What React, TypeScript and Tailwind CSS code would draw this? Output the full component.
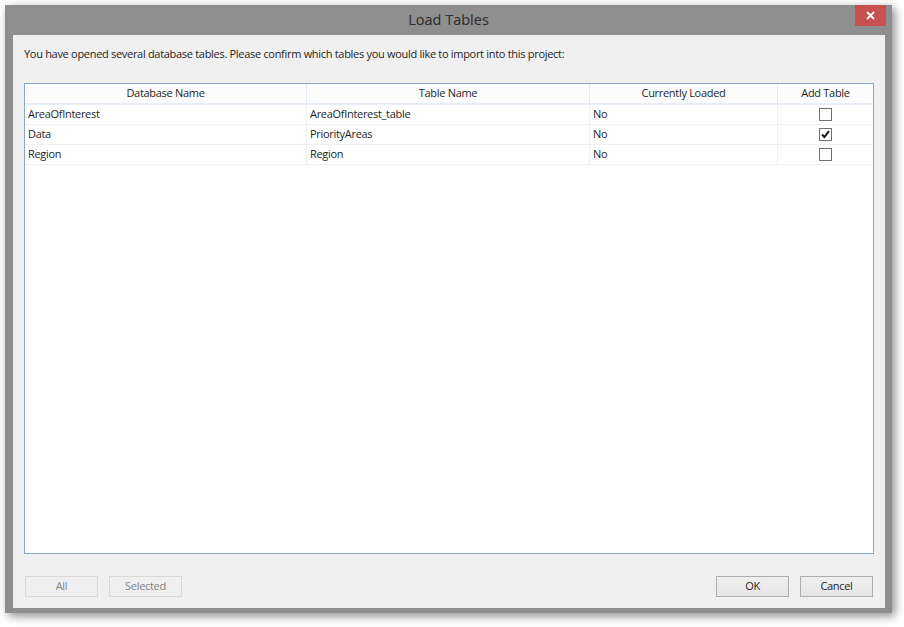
import React from 'react';

const rows = [
  { db: 'AreaOfInterest', table: 'AreaOfInterest_table', loaded: 'No', add: false },
  { db: 'Data', table: 'PriorityAreas', loaded: 'No', add: true },
  { db: 'Region', table: 'Region', loaded: 'No', add: false },
];

function CheckBox({ checked }: { checked: boolean }) {
  return (
    <div className="w-[13px] h-[13px] border border-[#707070] bg-white flex items-center justify-center">
      {checked && (
        <svg width="9" height="9" viewBox="0 0 9 9">
          <path d="M1 4.5 L3.4 7 L8 1.2" fill="none" stroke="#111" strokeWidth="1.9" />
        </svg>
      )}
    </div>
  );
}

function Button({ label, disabled }: { label: string; disabled?: boolean }) {
  return (
    <div
      className={`w-[73px] h-[21px] flex items-center justify-center text-[11px] tracking-[-0.3px] border ${
        disabled
          ? 'border-[#d9d9d9] bg-[#efefef] text-[#838383]'
          : 'border-[#acacac] bg-gradient-to-b from-[#f0f0f0] to-[#e5e5e5] text-[#1e1e1e]'
      }`}
    >
      {label}
    </div>
  );
}

export default function App() {
  return (
    <div className="min-h-screen bg-white p-[5px]" style={{ fontFamily: '"Open Sans", "Noto Sans", sans-serif' }}>
      <div className="w-[887px] h-[608px] bg-[#8e8e8e] flex flex-col shadow-[3px_3px_9px_rgba(0,0,0,0.45)]">
        {/* title bar */}
        <div className="relative h-[30px] flex items-center justify-center">
          <span className="text-[14.5px] text-[#2b2b2b]">Load Tables</span>
          <div className="absolute top-0 right-[6px] w-[31px] h-[21px] bg-[#c75050] flex items-center justify-center">
            <svg width="9" height="9" viewBox="0 0 9 9">
              <path d="M1 1 L8 8 M8 1 L1 8" stroke="white" strokeWidth="1.8" />
            </svg>
          </div>
        </div>

        <div className="flex-1 ml-[8px] mr-[7px] mb-[5px] bg-[#f0f0f0] px-[11px] pt-[11px] pb-[11px] flex flex-col text-[#1e1e1e] text-[11px] tracking-[-0.3px]">
          <p className="leading-[16px]">
            You have opened several database tables. Please confirm which tables you would like to import into this project:
          </p>

          <div className="mt-[21px] flex-1 bg-white border border-[#8aa8cf]">
            <div className="flex h-[21px] border-b-2 border-[#e8eef7] bg-[#fcfcfc]">
              <div className="w-[282px] flex items-center justify-center border-r border-[#e3eaf4]">Database Name</div>
              <div className="w-[283px] flex items-center justify-center border-r border-[#e3eaf4]">Table Name</div>
              <div className="w-[188px] flex items-center justify-center border-r border-[#e3eaf4]">Currently Loaded</div>
              <div className="flex-1 flex items-center justify-center">Add Table</div>
            </div>
            {rows.map((r) => (
              <div key={r.db} className="flex h-[20px] border-b border-[#f0f0f0]">
                <div className="w-[282px] flex items-center px-[3px] border-r border-[#f0f0f0]">{r.db}</div>
                <div className="w-[283px] flex items-center px-[3px] border-r border-[#f0f0f0]">{r.table}</div>
                <div className="w-[188px] flex items-center px-[3px] border-r border-[#f0f0f0]">{r.loaded}</div>
                <div className="flex-1 flex items-center justify-center">
                  <CheckBox checked={r.add} />
                </div>
              </div>
            ))}
          </div>

          <div className="mt-[22px] flex items-center px-px">
            <div className="flex gap-[11px]">
              <Button label="All" disabled />
              <Button label="Selected" disabled />
            </div>
            <div className="ml-auto flex gap-[11px]">
              <Button label="OK" />
              <Button label="Cancel" />
            </div>
          </div>
        </div>
      </div>
    </div>
  );
}
